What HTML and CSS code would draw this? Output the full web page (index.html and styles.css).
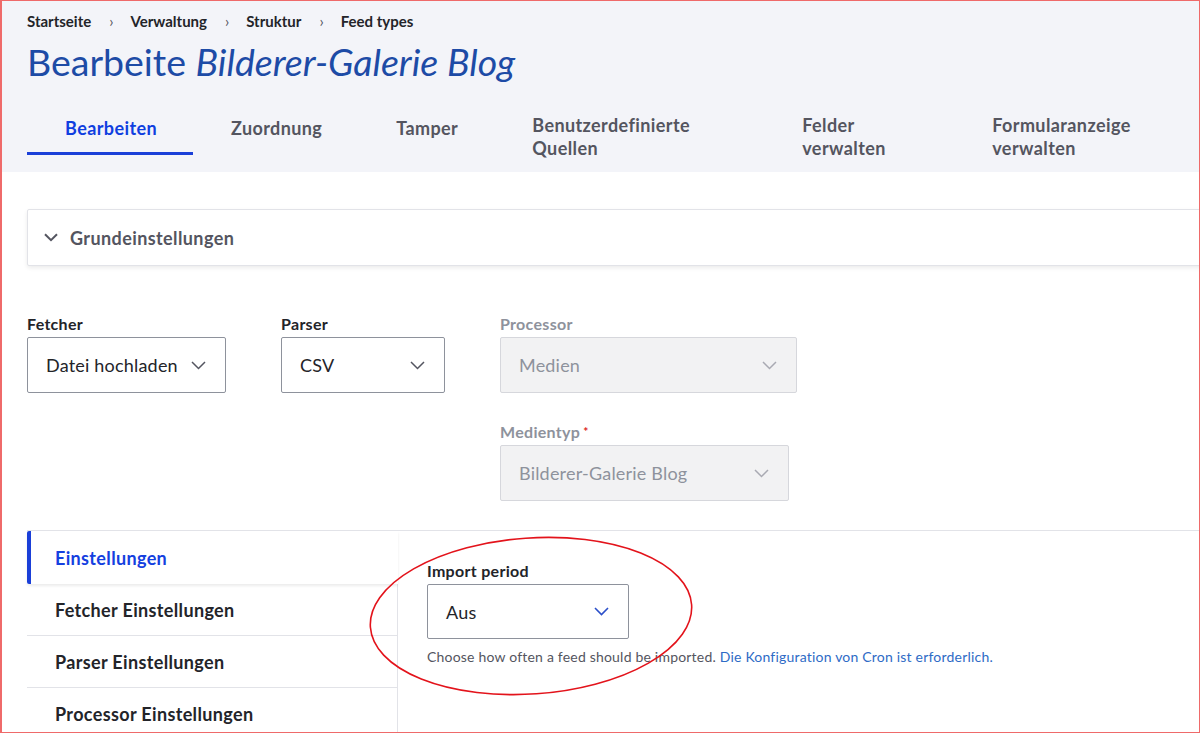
FILE: index.html
```html
<!DOCTYPE html>
<html lang="de">
<head>
<meta charset="utf-8">
<title>Bearbeite Bilderer-Galerie Blog</title>
<link rel="stylesheet" href="styles.css">
</head>
<body>
<header class="page-header">
  <nav class="breadcrumb">
    <a class="crumb" href="#">Startseite</a><span class="sep">›</span>
    <a class="crumb" href="#">Verwaltung</a><span class="sep">›</span>
    <a class="crumb" href="#">Struktur</a><span class="sep">›</span>
    <a class="crumb" href="#">Feed types</a>
  </nav>
  <h1 class="page-title">Bearbeite <em>Bilderer-Galerie Blog</em></h1>
  <ul class="tabs">
    <li class="tab tab--active">Bearbeiten</li>
    <li class="tab">Zuordnung</li>
    <li class="tab">Tamper</li>
    <li class="tab tab--wrap tab--sources">Benutzerdefinierte Quellen</li>
    <li class="tab tab--wrap tab--fields">Felder verwalten</li>
    <li class="tab tab--wrap tab--form">Formularanzeige verwalten</li>
  </ul>
</header>

<main class="content">
  <details class="card" open>
    <summary class="card-summary">
      <svg class="summary-icon" width="14" height="9" viewBox="0 0 14 9"><path d="M1 1.2l6 6 6-6" fill="none" stroke="#545560" stroke-width="2"/></svg>
      Grundeinstellungen
    </summary>
  </details>

  <div class="plugin-row">
    <div class="field">
      <div class="field-label">Fetcher</div>
      <div class="select select--fetcher">
        <span>Datei hochladen</span>
        <svg width="15" height="9" viewBox="0 0 15 9"><path d="M1 1l6.5 6.5L14 1" fill="none" stroke="#545560" stroke-width="1.5"/></svg>
      </div>
    </div>
    <div class="field">
      <div class="field-label">Parser</div>
      <div class="select select--parser">
        <span>CSV</span>
        <svg width="15" height="9" viewBox="0 0 15 9"><path d="M1 1l6.5 6.5L14 1" fill="none" stroke="#545560" stroke-width="1.5"/></svg>
      </div>
    </div>
    <div class="field-stack">
      <div class="field">
        <div class="field-label field-label--disabled">Processor</div>
        <div class="select select--disabled select--processor">
          <span>Medien</span>
          <svg width="15" height="9" viewBox="0 0 15 9"><path d="M1 1l6.5 6.5L14 1" fill="none" stroke="#a9aab2" stroke-width="1.5"/></svg>
        </div>
      </div>
      <div class="field">
        <div class="field-label field-label--disabled">Medientyp<span class="required">*</span></div>
        <div class="select select--disabled select--mediatype">
          <span>Bilderer-Galerie Blog</span>
          <svg width="15" height="9" viewBox="0 0 15 9"><path d="M1 1l6.5 6.5L14 1" fill="none" stroke="#a9aab2" stroke-width="1.5"/></svg>
        </div>
      </div>
    </div>
  </div>

  <div class="vertical-tabs">
    <ul class="vt-menu">
      <li class="vt-item vt-item--active">Einstellungen</li>
      <li class="vt-item">Fetcher Einstellungen</li>
      <li class="vt-item">Parser Einstellungen</li>
      <li class="vt-item">Processor Einstellungen</li>
    </ul>
    <div class="vt-pane">
      <div class="field-label">Import period</div>
      <div class="select select--period">
        <span>Aus</span>
        <svg width="15" height="9" viewBox="0 0 15 9"><path d="M1 1l6.5 6.5L14 1" fill="none" stroke="#2b4fc9" stroke-width="1.6"/></svg>
      </div>
      <p class="description">Choose how often a feed should be imported. <a href="#">Die Konfiguration von Cron ist erforderlich.</a></p>
    </div>
  </div>
</main>

<svg class="annotation" width="1200" height="733" viewBox="0 0 1200 733">
  <ellipse cx="531" cy="616" rx="161" ry="78" transform="rotate(-4 531 616)" fill="none" stroke="#e3131b" stroke-width="1.6"/>
</svg>
<div class="frame"></div>
</body>
</html>
```

FILE: styles.css
```css
html, body {
  margin: 0;
  height: 100%;
  overflow: hidden;
}

body {
  font-family: Lato, "Noto Sans", "Liberation Sans", sans-serif;
  color: #232429;
  background: #fff;
}

ul { list-style: none; margin: 0; padding: 0; }

/* Page header with breadcrumb, title and primary tabs */
.page-header {
  background: #f3f4f9;
  padding: 12px 0 0 27px;
}

.breadcrumb {
  display: flex;
  align-items: center;
  font-size: 15px;
  font-weight: 700;
  line-height: 18px;
}

.crumb { color: #232429; text-decoration: none; }

.sep {
  margin: 0 17px 0 18px;
  font-weight: 400;
  color: #545560;
}

.page-title {
  margin: 10px 0 0;
  font-size: 37.5px;
  line-height: 44px;
  font-weight: 400;
  color: #1d4ba6;
}

.page-title em { font-style: italic; }

.tabs {
  display: flex;
  align-items: flex-start;
  margin-top: 21px;
}

.tab {
  box-sizing: border-box;
  flex: none;
  padding: 12px 36px 12px 38px;
  font-size: 18px;
  font-weight: 700;
  line-height: 23px;
  letter-spacing: 0.4px;
  color: #545560;
}

.tab--active {
  color: #0f3ee0;
  border-bottom: 3px solid #1a3fd8;
}

.tab--wrap { padding-top: 9px; }
.tab--sources { width: 270px; }
.tab--fields { width: 190px; }
.tab--form { width: 230px; }

/* Main form area */
.content {
  padding-left: 27px;
}

.card {
  margin-top: 37px;
  margin-right: -20px;
  border: 1px solid #e2e3e8;
  border-radius: 2px;
  box-shadow: 0 2px 4px rgba(0, 0, 0, 0.08);
  background: #fff;
}

.card-summary {
  display: flex;
  align-items: center;
  gap: 12px;
  height: 55px;
  padding-left: 16px;
  list-style: none;
  font-size: 18px;
  font-weight: 700;
  letter-spacing: 0.4px;
  color: #545560;
  cursor: pointer;
}

.card-summary::-webkit-details-marker { display: none; }

.plugin-row {
  display: flex;
  align-items: flex-start;
  gap: 55px;
  margin-top: 49px;
}

.field-stack {
  display: flex;
  flex-direction: column;
  gap: 30px;
}

.field-label {
  font-size: 16px;
  font-weight: 700;
  line-height: 18px;
  letter-spacing: 0.3px;
  margin-bottom: 4px;
  color: #232429;
}

.field-label--disabled { color: #8e929c; }

.required {
  color: #dc2323;
  margin-left: 3px;
  font-size: 12px;
  vertical-align: top;
}

.select {
  box-sizing: border-box;
  display: flex;
  align-items: center;
  justify-content: space-between;
  height: 56px;
  padding: 0 19px 0 18px;
  border: 1px solid #8e929c;
  border-radius: 2px;
  background: #fff;
  font-size: 18px;
  letter-spacing: 0.2px;
  color: #232429;
}

.select--fetcher { width: 199px; }
.select--parser { width: 164px; }
.select--processor { width: 297px; }
.select--mediatype { width: 289px; }
.select--period { width: 202px; height: 55px; }

.select--disabled {
  background: #f2f2f3;
  border-color: #d6d7dc;
  color: #8e929c;
}

/* Vertical tabs */
.vertical-tabs {
  display: flex;
  margin-top: 29px;
  border-top: 1px solid #e2e3e8;
}

.vt-menu {
  flex: none;
  width: 371px;
}

.vt-item {
  box-sizing: border-box;
  height: 52px;
  padding-left: 28px;
  display: flex;
  align-items: center;
  font-size: 18px;
  font-weight: 700;
  letter-spacing: 0.35px;
  color: #232429;
  border-bottom: 1px solid #e2e3e8;
  border-right: 1px solid #e2e3e8;
}

.vt-item--active {
  height: 53px;
  color: #1440e0;
  border-left: 4px solid #1a3fd8;
  border-right: none;
  border-bottom: none;
  border-radius: 2px 0 0 2px;
  padding-left: 24px;
  box-shadow: 0 2px 3px rgba(0, 0, 0, 0.08);
  position: relative;
}

.vt-pane {
  flex: 1;
  padding: 31px 0 0 29px;
}

.description {
  margin: 9px 0 0;
  font-size: 14px;
  line-height: 18px;
  letter-spacing: 0.2px;
  color: #545560;
}

.description a {
  color: #2e6bc6;
  text-decoration: none;
}

/* Overlays: hand-drawn annotation and window frame */
.annotation {
  position: fixed;
  left: 0;
  top: 0;
  pointer-events: none;
}

.frame {
  position: fixed;
  inset: 0;
  border: 1px solid #ef6a6a;
  border-left-width: 2px;
  pointer-events: none;
}
```
